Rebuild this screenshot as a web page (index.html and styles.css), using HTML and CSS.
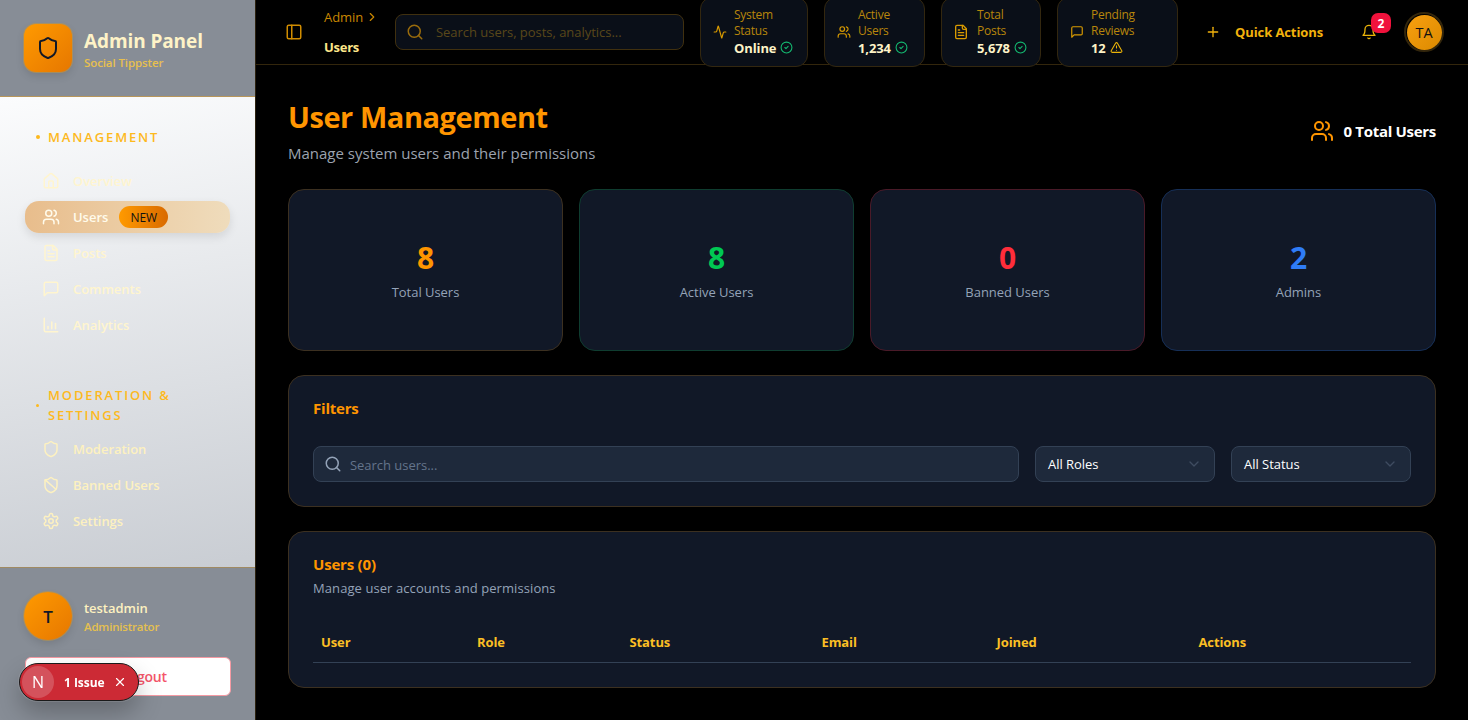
FILE: index.html
```html
<!DOCTYPE html>
<html lang="en">
<head>
<meta charset="utf-8">
<title>User Management</title>
<link rel="stylesheet" href="styles.css">
</head>
<body>
<svg class="defs" aria-hidden="true">
<symbol id="i-panel" viewBox="0 0 24 24"><rect x="3" y="3" width="18" height="18" rx="2"/><path d="M9 3v18"/></symbol>
<symbol id="i-search" viewBox="0 0 24 24"><circle cx="11" cy="11" r="8"/><path d="m21 21-4.3-4.3"/></symbol>
<symbol id="i-activity" viewBox="0 0 24 24"><path d="M22 12h-2.48a2 2 0 0 0-1.93 1.46l-2.35 8.36a.25.25 0 0 1-.48 0L9.24 2.18a.25.25 0 0 0-.48 0l-2.35 8.36A2 2 0 0 1 4.49 12H2"/></symbol>
<symbol id="i-check" viewBox="0 0 24 24"><circle cx="12" cy="12" r="10"/><path d="m9 12 2 2 4-4"/></symbol>
<symbol id="i-users" viewBox="0 0 24 24"><path d="M16 21v-2a4 4 0 0 0-4-4H6a4 4 0 0 0-4 4v2"/><circle cx="9" cy="7" r="4"/><path d="M22 21v-2a4 4 0 0 0-3-3.87"/><path d="M16 3.13a4 4 0 0 1 0 7.75"/></symbol>
<symbol id="i-file" viewBox="0 0 24 24"><path d="M15 2H6a2 2 0 0 0-2 2v16a2 2 0 0 0 2 2h12a2 2 0 0 0 2-2V7Z"/><path d="M14 2v4a2 2 0 0 0 2 2h4"/><path d="M10 9H8"/><path d="M16 13H8"/><path d="M16 17H8"/></symbol>
<symbol id="i-msg" viewBox="0 0 24 24"><path d="M21 15a2 2 0 0 1-2 2H7l-4 4V5a2 2 0 0 1 2-2h14a2 2 0 0 1 2 2z"/></symbol>
<symbol id="i-alert" viewBox="0 0 24 24"><path d="m21.73 18-8-14a2 2 0 0 0-3.48 0l-8 14A2 2 0 0 0 4 21h16a2 2 0 0 0 1.73-3"/><path d="M12 9v4"/><path d="M12 17h.01"/></symbol>
<symbol id="i-plus" viewBox="0 0 24 24"><path d="M5 12h14"/><path d="M12 5v14"/></symbol>
<symbol id="i-bell" viewBox="0 0 24 24"><path d="M6 8a6 6 0 0 1 12 0c0 7 3 9 3 9H3s3-2 3-9"/><path d="M10.3 21a1.94 1.94 0 0 0 3.4 0"/></symbol>
<symbol id="i-shield" viewBox="0 0 24 24"><path d="M20 13c0 5-3.5 7.5-7.66 8.95a1 1 0 0 1-.67-.01C7.5 20.5 4 18 4 13V6a1 1 0 0 1 1-1c2 0 4.5-1.2 6.24-2.72a1.17 1.17 0 0 1 1.52 0C14.51 3.81 17 5 19 5a1 1 0 0 1 1 1z"/></symbol>
<symbol id="i-ban" viewBox="0 0 24 24"><path d="M20 13c0 5-3.5 7.5-7.66 8.95a1 1 0 0 1-.67-.01C7.5 20.5 4 18 4 13V6a1 1 0 0 1 1-1c2 0 4.5-1.2 6.24-2.72a1.17 1.17 0 0 1 1.52 0C14.51 3.81 17 5 19 5a1 1 0 0 1 1 1z"/><path d="m4.243 5.21 14.39 12.472"/></symbol>
<symbol id="i-home" viewBox="0 0 24 24"><path d="M15 21v-8a1 1 0 0 0-1-1h-4a1 1 0 0 0-1 1v8"/><path d="M3 10a2 2 0 0 1 .709-1.528l7-5.999a2 2 0 0 1 2.582 0l7 5.999A2 2 0 0 1 21 10v9a2 2 0 0 1-2 2H5a2 2 0 0 1-2-2z"/></symbol>
<symbol id="i-chart" viewBox="0 0 24 24"><path d="M3 3v16a2 2 0 0 0 2 2h16"/><path d="M8 17v-3"/><path d="M13 17V8"/><path d="M18 17v-7"/></symbol>
<symbol id="i-gear" viewBox="0 0 24 24"><path d="M12.22 2h-.44a2 2 0 0 0-2 2v.18a2 2 0 0 1-1 1.73l-.43.25a2 2 0 0 1-2 0l-.15-.08a2 2 0 0 0-2.73.73l-.22.38a2 2 0 0 0 .73 2.73l.15.1a2 2 0 0 1 1 1.72v.51a2 2 0 0 1-1 1.74l-.15.09a2 2 0 0 0-.73 2.73l.22.38a2 2 0 0 0 2.73.73l.15-.08a2 2 0 0 1 2 0l.43.25a2 2 0 0 1 1 1.73V20a2 2 0 0 0 2 2h.44a2 2 0 0 0 2-2v-.18a2 2 0 0 1 1-1.73l.43-.25a2 2 0 0 1 2 0l.15.08a2 2 0 0 0 2.73-.73l.22-.39a2 2 0 0 0-.73-2.73l-.15-.08a2 2 0 0 1-1-1.74v-.5a2 2 0 0 1 1-1.74l.15-.09a2 2 0 0 0 .73-2.73l-.22-.38a2 2 0 0 0-2.73-.73l-.15.08a2 2 0 0 1-2 0l-.43-.25a2 2 0 0 1-1-1.73V4a2 2 0 0 0-2-2z"/><circle cx="12" cy="12" r="3"/></symbol>
<symbol id="i-chev" viewBox="0 0 24 24"><path d="m6 9 6 6 6-6"/></symbol>
<symbol id="i-chevr" viewBox="0 0 24 24"><path d="m9 18 6-6-6-6"/></symbol>
<symbol id="i-x" viewBox="0 0 24 24"><path d="M18 6 6 18"/><path d="m6 6 12 12"/></symbol>
<symbol id="i-logout" viewBox="0 0 24 24"><path d="M9 21H5a2 2 0 0 1-2-2V5a2 2 0 0 1 2-2h4"/><path d="m16 17 5-5-5-5"/><path d="M21 12H9"/></symbol>
</svg>

<div class="app">
  <aside class="sidebar">
    <div class="brand">
      <div class="brand-logo"><svg class="ic ic-24"><use href="#i-shield"/></svg></div>
      <div class="brand-text">
        <div class="brand-title">Admin Panel</div>
        <div class="brand-sub">Social Tippster</div>
      </div>
    </div>
    <nav class="nav">
      <div class="nav-group">
        <div class="nav-label"><span class="dot"></span><span>MANAGEMENT</span></div>
        <ul class="nav-list">
          <li class="nav-item faint"><svg class="ic ic-18"><use href="#i-home"/></svg><span>Overview</span></li>
          <li class="nav-item active"><svg class="ic ic-18"><use href="#i-users"/></svg><span>Users</span><span class="new">NEW</span></li>
          <li class="nav-item faint"><svg class="ic ic-18"><use href="#i-file"/></svg><span>Posts</span></li>
          <li class="nav-item faint"><svg class="ic ic-18"><use href="#i-msg"/></svg><span>Comments</span></li>
          <li class="nav-item faint"><svg class="ic ic-18"><use href="#i-chart"/></svg><span>Analytics</span></li>
        </ul>
      </div>
      <div class="nav-group second">
        <div class="nav-label"><span class="dot small"></span><span>MODERATION &amp; SETTINGS</span></div>
        <ul class="nav-list">
          <li class="nav-item"><svg class="ic ic-18"><use href="#i-shield"/></svg><span>Moderation</span></li>
          <li class="nav-item"><svg class="ic ic-18"><use href="#i-ban"/></svg><span>Banned Users</span></li>
          <li class="nav-item"><svg class="ic ic-18"><use href="#i-gear"/></svg><span>Settings</span></li>
        </ul>
      </div>
    </nav>
    <div class="side-foot">
      <div class="me">
        <div class="me-avatar">T</div>
        <div class="me-text">
          <div class="me-name">testadmin</div>
          <div class="me-role">Administrator</div>
        </div>
      </div>
      <button class="logout"><svg class="ic ic-16"><use href="#i-logout"/></svg><span>Logout</span></button>
    </div>
  </aside>

  <div class="content">
    <header class="topbar">
      <svg class="ic ic-18 toggle"><use href="#i-panel"/></svg>
      <div class="crumbs">
        <div class="crumb-top">Admin <svg class="ic ic-14"><use href="#i-chevr"/></svg></div>
        <div class="crumb-now">Users</div>
      </div>
      <div class="top-search"><svg class="ic ic-18"><use href="#i-search"/></svg><span>Search users, posts, analytics...</span></div>
      <div class="pills">
        <div class="pill w-sys"><svg class="ic ic-14"><use href="#i-activity"/></svg><div><div class="pill-l">System<br>Status</div><div class="pill-v">Online <svg class="ic ic-13 ok"><use href="#i-check"/></svg></div></div></div>
        <div class="pill w-act"><svg class="ic ic-14"><use href="#i-users"/></svg><div><div class="pill-l">Active<br>Users</div><div class="pill-v">1,234 <svg class="ic ic-13 ok"><use href="#i-check"/></svg></div></div></div>
        <div class="pill w-tot"><svg class="ic ic-16"><use href="#i-file"/></svg><div><div class="pill-l">Total<br>Posts</div><div class="pill-v">5,678 <svg class="ic ic-13 ok"><use href="#i-check"/></svg></div></div></div>
        <div class="pill w-pen"><svg class="ic ic-14"><use href="#i-msg"/></svg><div><div class="pill-l">Pending<br>Reviews</div><div class="pill-v">12 <svg class="ic ic-13 warn"><use href="#i-alert"/></svg></div></div></div>
      </div>
      <div class="quick"><svg class="ic ic-16"><use href="#i-plus"/></svg><span>Quick Actions</span></div>
      <div class="bell"><svg class="ic ic-16"><use href="#i-bell"/></svg><span class="bell-n">2</span></div>
      <div class="top-avatar"><span>TA</span></div>
    </header>

    <main class="page">
      <div class="page-head">
        <div class="page-title">
          <h1>User Management</h1>
          <p>Manage system users and their permissions</p>
        </div>
        <div class="total"><svg class="ic ic-24"><use href="#i-users"/></svg><span>0 Total Users</span></div>
      </div>
      <section class="stats">
        <div class="stat c-o"><b>8</b><span>Total Users</span></div>
        <div class="stat c-g"><b>8</b><span>Active Users</span></div>
        <div class="stat c-r"><b>0</b><span>Banned Users</span></div>
        <div class="stat c-b"><b>2</b><span>Admins</span></div>
      </section>
      <section class="panel filters">
        <h2>Filters</h2>
        <div class="filter-row">
          <div class="field grow"><svg class="ic ic-18"><use href="#i-search"/></svg><span>Search users...</span></div>
          <div class="field sel"><span>All Roles</span><svg class="ic ic-16"><use href="#i-chev"/></svg></div>
          <div class="field sel"><span>All Status</span><svg class="ic ic-16"><use href="#i-chev"/></svg></div>
        </div>
      </section>
      <section class="panel users">
        <h2>Users (0)</h2>
        <p>Manage user accounts and permissions</p>
        <div class="thead">
          <span>User</span><span>Role</span><span>Status</span><span>Email</span><span>Joined</span><span>Actions</span>
        </div>
      </section>
    </main>
  </div>
</div>

<div class="issue">
  <span class="issue-n">N</span>
  <span class="issue-t">1 Issue</span>
  <svg class="ic ic-14"><use href="#i-x"/></svg>
</div>
</body>
</html>
```

FILE: styles.css
```css
* { box-sizing: border-box; }
html, body { margin: 0; height: 100%; overflow: hidden; }
body { background: #000; font-family: "Open Sans", "Noto Sans", "Liberation Sans", sans-serif; font-size: 13px; letter-spacing: -0.03px; color: #fff; }
.defs { display: none; }
.ic { fill: none; stroke: currentColor; stroke-width: 2; stroke-linecap: round; stroke-linejoin: round; flex: none; display: block; }
.ic-12 { width: 12px; height: 12px; }
.ic-13 { width: 13px; height: 13px; }
.ic-14 { width: 14px; height: 14px; }
.ic-16 { width: 16px; height: 16px; }
.ic-18 { width: 18px; height: 18px; }
.ic-24 { width: 24px; height: 24px; }
h1, h2, p, ul { margin: 0; padding: 0; }
ul { list-style: none; }

.app { display: flex; height: 720px; }

/* Sidebar */
.sidebar { width: 256px; flex: none; height: 720px; display: flex; flex-direction: column; border-right: 1px solid #2c2210; background: #fff; }
.brand { height: 97px; flex: none; background: #878d96; border-bottom: 1px solid #b8965a; padding: 24px 24px 0; display: flex; gap: 12px; }
.brand-logo { width: 48px; height: 48px; border-radius: 12px; background: linear-gradient(135deg, #ff9a00, #e67700); color: #111827; display: flex; align-items: center; justify-content: center; box-shadow: 0 0 0 1px rgba(190, 150, 70, .6), 0 4px 8px rgba(0, 0, 0, .12); }
.brand-text { padding-top: 4px; }
.brand-title { font-size: 19px; line-height: 26px; font-weight: 700; color: #fef3c7; letter-spacing: -0.1px; }
.brand-sub { font-size: 11.5px; line-height: 18px; font-weight: 600; color: #e8c04e; letter-spacing: -0.1px; }

.nav { flex: 1; padding: 30px 25px 0; background: linear-gradient(170deg, #fbfcfd 0%, #c9cdd3 100%); }
.nav-label { display: flex; align-items: center; gap: 8px; padding-left: 11px; font-size: 13px; line-height: 20px; font-weight: 600; letter-spacing: 1.85px; color: #fdb91e; }
.dot { width: 4px; height: 4px; border-radius: 50%; background: #fdb91e; flex: none; }
.dot.small { width: 3px; height: 3px; margin-right: 1px; }
.nav-list { display: flex; flex-direction: column; gap: 4px; margin-top: 18px; }
.second { margin-top: 44px; }
.second .nav-list { margin-top: 8px; }
.nav-item { height: 32px; display: flex; align-items: center; gap: 13px; padding-left: 17px; border-radius: 14px; font-size: 13px; font-weight: 600; color: #fdf1c0; }
.nav-item.faint { color: #fff5cf; }
.nav-item.active { background: linear-gradient(90deg, #e8bd8c, #efdcbc); color: #fffbeb; box-shadow: 0 4px 10px rgba(0, 0, 0, .1); }
.new { width: 49px; height: 22px; border-radius: 11px; background: linear-gradient(90deg, #ff9a00, #d96a00); color: #111; font-size: 12px; font-weight: 500; display: flex; align-items: center; justify-content: center; margin-left: -2px; }

.side-foot { height: 153px; flex: none; background: #878d96; border-top: 1px solid #a08a62; padding: 24px 24px 0; }
.me { display: flex; gap: 12px; align-items: center; }
.me-text { padding-top: 4px; }
.me-avatar { width: 48px; height: 48px; border-radius: 50%; background: linear-gradient(135deg, #ff9a00, #e67700); color: #111827; font-size: 17px; font-weight: 600; display: flex; align-items: center; justify-content: center; box-shadow: 0 0 0 1px rgba(190, 150, 70, .6), 0 4px 8px rgba(0, 0, 0, .12); }
.me-name { font-size: 13px; line-height: 18px; font-weight: 600; color: #fdf1c0; }
.me-role { font-size: 11.5px; line-height: 20px; font-weight: 600; color: #e5c04f; letter-spacing: -0.2px; }
.logout { margin-top: 17px; width: 206px; margin-left: 1px; height: 39px; background: #fff; border: 1px solid #f59aa3; border-radius: 6px; display: flex; align-items: center; justify-content: center; gap: 8px; color: #f4566a; font: inherit; font-size: 14px; font-weight: 600; letter-spacing: -0.2px; padding: 0 0 0 8px; }

/* Top bar */
.content { flex: 1; min-width: 0; display: flex; flex-direction: column; }
.topbar { height: 65px; flex: none; border-bottom: 1px solid #33260c; display: flex; align-items: center; padding-left: 29px; }
.toggle { color: #d08c00; }
.crumbs { margin-left: 21px; width: 71px; flex: none; }
.crumb-top { display: flex; align-items: center; gap: 2px; height: 18px; font-size: 13px; color: #c98700; margin-bottom: 12px; }
.crumb-now { font-size: 13px; line-height: 18px; font-weight: 700; letter-spacing: -0.25px; color: #fde68a; }
.top-search { width: 289px; height: 36px; background: #0a0f18; border: 1px solid #40300f; border-radius: 8px; display: flex; align-items: center; gap: 12px; padding-left: 10px; color: #9a6c0c; flex: none; }
.top-search span { color: #59471a; font-size: 13px; }
.pills { display: flex; gap: 16px; margin-left: 16px; flex: none; }
.pill { height: 70px; background: #0a0f18; border: 1px solid #33270f; border-radius: 12px; display: flex; align-items: center; gap: 7px; padding-left: 12px; color: #d89a00; flex: none; }
.w-sys { width: 108px; }
.w-act { width: 101px; }
.w-tot { width: 100px; padding-left: 11px; gap: 8px; }
.w-pen { width: 121px; padding-left: 12px; }
.pill-l { font-size: 12px; line-height: 16px; letter-spacing: -0.25px; color: #b8860b; margin-top: -1px; }
.pill-v { display: flex; align-items: center; gap: 4px; font-size: 13px; line-height: 18px; font-weight: 700; letter-spacing: -0.1px; color: #fef3c7; }
.ok { color: #14b870; }
.warn { color: #eab308; }
.quick { margin-left: 27px; display: flex; align-items: center; gap: 14px; color: #f2b20c; font-size: 13px; font-weight: 700; letter-spacing: -0.1px; flex: none; }
.bell { margin-left: 38px; position: relative; color: #eab308; flex: none; }
.bell-n { position: absolute; left: 10px; top: -11px; width: 20px; height: 20px; border-radius: 7px; background: #f0123c; color: #fff; font-size: 12px; font-weight: 700; display: flex; align-items: center; justify-content: center; }
.top-avatar { margin-left: 27px; width: 40px; height: 40px; border-radius: 50%; border: 2px solid #33260c; flex: none; background: #000; display: flex; align-items: center; justify-content: center; }
.top-avatar span { width: 35px; height: 35px; border-radius: 50%; background: linear-gradient(135deg, #f8a010, #dc8a00); color: #111; font-size: 14.5px; display: flex; align-items: center; justify-content: center; }

/* Page */
.page { flex: 1; padding: 32px 32px 0; display: flex; flex-direction: column; }
.page-head { display: flex; justify-content: space-between; align-items: center; height: 60px; }
.page-title { padding-top: 8px; }
h1 { font-size: 29px; line-height: 40px; font-weight: 700; color: #ff9500; letter-spacing: -0.45px; }
.page-head p { font-size: 15px; line-height: 24px; color: #9ca3af; margin-top: 4px; letter-spacing: 0; }
.total { display: flex; align-items: center; gap: 9px; color: #ff9500; margin-top: 8px; }
.total span { color: #fff; font-size: 15px; font-weight: 700; letter-spacing: -0.3px; }
.stats { display: grid; grid-template-columns: repeat(4, 1fr); gap: 16px; margin-top: 32px; }
.stat { height: 162px; background: #111827; border: 1px solid #3c3020; border-radius: 16px; padding-top: 1px; display: flex; flex-direction: column; align-items: center; justify-content: center; }
.stat b { font-size: 30px; line-height: 36px; font-weight: 700; }
.stat span { font-size: 13px; line-height: 20px; color: #94a3b8; margin-top: 6px; }
.c-o b { color: #ff9500; }
.c-g { border-color: #0f3d30; }
.c-g b { color: #00c853; }
.c-r { border-color: #4a1a28; }
.c-r b { color: #ff2d3a; }
.c-b { border-color: #162f57; }
.c-b b { color: #2f7cf6; }
.panel { background: #111827; border: 1px solid #3c3020; border-radius: 16px; padding: 24px; margin-top: 24px; }
.panel h2 { font-size: 15px; line-height: 18px; font-weight: 700; color: #ff9500; letter-spacing: -0.2px; }
.filters { height: 132px; padding-top: 23px; }
.filter-row { display: flex; gap: 16px; margin-top: 29px; }
.field { height: 36px; background: #1e293b; border: 1px solid #334155; border-radius: 8px; display: flex; align-items: center; font-size: 13px; flex: none; }
.grow { flex: 1; gap: 8px; padding-left: 10px; color: #94a3b8; }
.grow span { color: #64748b; padding-top: 1px; }
.sel { width: 180px; justify-content: space-between; padding: 0 12px; color: #fff; }
.sel .ic { color: #3f4c60; }
.users { height: 157px; padding-top: 23px; }
.users p { font-size: 13px; line-height: 20px; color: #94a3b8; margin-top: 5px; letter-spacing: 0.08px; }
.thead { display: grid; grid-template-columns: 156px 152.5px 192px 175px 202px 1fr; height: 41px; margin-top: 24px; padding-left: 8px; align-items: center; border-bottom: 1px solid #334155; color: #fbbf24; font-size: 13px; font-weight: 700; letter-spacing: -0.1px; }

/* Dev overlay */
.issue { position: fixed; left: 19px; top: 663px; width: 120px; height: 38px; border-radius: 19px; background: #cc2a35; border: 1px solid #1a1a1a; box-shadow: 0 0 0 1px rgba(255, 255, 255, .1), 0 12px 24px rgba(0, 0, 0, .25); display: flex; align-items: center; color: #fff; }
.issue-n { width: 32px; height: 32px; margin-left: 2px; border-radius: 50%; background: #d4525c; display: flex; align-items: center; justify-content: center; font-size: 16px; flex: none; }
.issue-t { margin-left: 10px; font-size: 12px; font-weight: 700; width: 49px; white-space: nowrap; }
```
